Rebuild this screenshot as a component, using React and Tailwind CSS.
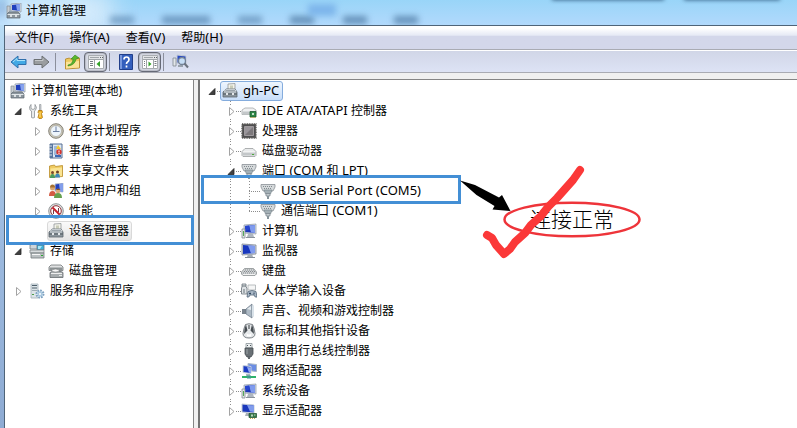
import { useState } from 'react';

const menus = ['文件(F)', '操作(A)', '查看(V)', '帮助(H)'];

const consoleTree = [
  { label: '计算机管理(本地)', icon: 'console', level: 0 },
  { label: '系统工具', icon: 'tools', level: 1, state: 'open' },
  { label: '任务计划程序', icon: 'clock', level: 2, state: 'closed' },
  { label: '事件查看器', icon: 'event', level: 2, state: 'closed' },
  { label: '共享文件夹', icon: 'shared', level: 2, state: 'closed' },
  { label: '本地用户和组', icon: 'users', level: 2, state: 'closed' },
  { label: '性能', icon: 'perf', level: 2, state: 'closed' },
  { label: '设备管理器', icon: 'device', level: 2 },
  { label: '存储', icon: 'storage', level: 1, state: 'open' },
  { label: '磁盘管理', icon: 'diskmgmt', level: 2 },
  { label: '服务和应用程序', icon: 'services', level: 1, state: 'closed' },
];

const deviceTree = [
  { label: 'IDE ATA/ATAPI 控制器', icon: 'ide', state: 'closed' },
  { label: '处理器', icon: 'cpu', state: 'closed' },
  { label: '磁盘驱动器', icon: 'drive', state: 'closed' },
  { label: '端口 (COM 和 LPT)', icon: 'port', state: 'open' },
  { label: 'USB Serial Port (COM5)', icon: 'port', child: true },
  { label: '通信端口 (COM1)', icon: 'port', child: true, last: true },
  { label: '计算机', icon: 'computer', state: 'closed' },
  { label: '监视器', icon: 'monitor', state: 'closed' },
  { label: '键盘', icon: 'keyboard', state: 'closed' },
  { label: '人体学输入设备', icon: 'hid', state: 'closed' },
  { label: '声音、视频和游戏控制器', icon: 'sound', state: 'closed' },
  { label: '鼠标和其他指针设备', icon: 'mouse', state: 'closed' },
  { label: '通用串行总线控制器', icon: 'usb', state: 'closed' },
  { label: '网络适配器', icon: 'network', state: 'closed' },
  { label: '系统设备', icon: 'computer', state: 'closed' },
  { label: '显示适配器', icon: 'display', state: 'closed', last: true },
];

const screen = (
  <>
    <path d="M3 2l12-1v10L3 10z" fill="#d5dbe3" stroke="#8b95a3" strokeWidth=".7" />
    <path d="M4 3l10-1v8L4 9z" fill="#1c36b8" />
    <path d="M8 2.6l6-.6v8L10 9.6z" fill="#7f9bee" />
    <path d="M4 3l4-.4 1 4L4 8z" fill="#2746d0" />
    <path d="M7 11h5l1 3H6z" fill="#aeb6bf" />
    <path d="M5 14h9v1H5z" fill="#8a929b" />
  </>
);

const toolbox = (
  <>
    <path d="M6 1l7-.5V7H6z" fill="#f2f2ea" stroke="#93989a" strokeWidth=".8" />
    <path d="M8 2.5h3v3H8z" fill="#c9ccb8" />
    <path d="M1 9l3-3h9l2 3v5H1z" fill="#8d979e" stroke="#5e686f" strokeWidth=".8" />
    <path d="M2 9h12M2 8.2l2-1.5h9l1 1.5" stroke="#d5dbdf" fill="none" />
    <path d="M1 11h14" stroke="#4f585e" />
    <path d="M4 10h2v2H4zM10 10h2v2h-2z" fill="#e4e8ea" />
  </>
);

const disk = (
  <>
    <path d="M1 8.500l3-3h8l3 3v4l-1 1H2l-1-1z" fill="#e9ebec" stroke="#9a9ea0" strokeWidth=".8" />
    <path d="M1.500 9h13v3.500h-13z" fill="#c3c7c9" />
    <path d="M2 9h12" stroke="#fafafa" />
    <path d="M11 11h2v1h-2z" fill="#4caa3a" />
  </>
);

const icons = {
  console: (
    <>
      <path d="M5 1l10-1v9L5 8z" fill="#e0e5ec" stroke="#8792a2" strokeWidth=".7" />
      <path d="M6 2l8-1v7L6 7z" fill="#2040bd" />
      <path d="M10 1.500l4-.5v7l-3-.5z" fill="#86a2ee" />
      <path d="M1 3h3v8H1z" fill="#c7cdd2" stroke="#858d94" strokeWidth=".7" />
      <path d="M1 11l2-2h9l2 2v4H1z" fill="#8d979e" stroke="#59636b" strokeWidth=".7" />
      <path d="M1.500 11.500h12" stroke="#e1e6e9" />
      <path d="M4 12h2v2H4zM9 12h2v2H9z" fill="#d9dee1" />
    </>
  ),
  tools: (
    <>
      <path d="M2 1.500v4l2 1 2-1v-4l1.500 3L6.500 7 5.500 8v6.500q-1.500 1-3 0V8L1 7 .5 4z" fill="#e9ebec" stroke="#8c9194" strokeWidth=".8" />
      <path d="M10.500 1.500h1.500V8h-1.500z" fill="#cbd0d3" stroke="#7c8184" strokeWidth=".5" />
      <path d="M9.500 7.500h3.500l.5 2-1 1 1 4-1 1H10l-1-1 1-4-1-1z" fill="#f0b323" stroke="#a56d0b" strokeWidth=".7" />
      <path d="M11 9v5" stroke="#ffe38a" />
    </>
  ),
  clock: (
    <>
      <circle cx="8" cy="8" r="7.300" fill="#d0cbbb" stroke="#77756b" strokeWidth=".9" />
      <circle cx="8" cy="8" r="5.500" fill="#eef5fb" stroke="#9d9c92" strokeWidth=".6" />
      <path d="M8 3.500v5h3.500M8 8.500H5" stroke="#5c7296" fill="none" strokeWidth=".9" />
    </>
  ),
  event: (
    <>
      <path d="M2 1h12v14H2z" fill="#dde8f4" stroke="#576e92" />
      <path d="M2 1h3v14H2z" fill="#58769f" />
      <path d="M1 3h3M1 6h3M1 9h3M1 12h3" stroke="#dce3ea" />
      <path d="M6 3h3v9H6z" fill="#9fb9d9" />
      <path d="M10 2l3 4H8z" fill="#f3c72a" />
      <circle cx="11" cy="9" r="2.700" fill="#d7342c" />
      <path d="M11 7.500v2M11 10v1" stroke="#fff" />
      <path d="M7 12h6v2H7z" fill="#3c68b4" />
    </>
  ),
  shared: (
    <>
      <path d="M1.500 3l5-1 1 1.500 7-1v11l-13 1z" fill="#efcb62" stroke="#b98d2a" strokeWidth=".8" />
      <path d="M2.500 5.500l11.500-1v8.500l-11.500 1z" fill="#fae493" />
      <circle cx="4.500" cy="9.500" r="1.500" fill="#7c4a2b" />
      <path d="M2 15q0-4 2.500-4T7 15z" fill="#4b9b60" />
      <circle cx="9.500" cy="9" r="1.500" fill="#6b4125" />
      <path d="M7 14.500q0-4 2.500-4t2.500 4z" fill="#3e89b9" />
    </>
  ),
  users: (
    <>
      <path d="M7 1l8-1v9L7 8z" fill="#203fbd" stroke="#bbc4cf" />
      <path d="M11 1l4-.5V9l-3-.5z" fill="#829eeb" />
      <circle cx="4.500" cy="5" r="2.500" fill="#d9a672" />
      <path d="M2 4.500q0-3 2.500-3T7 4.500z" fill="#a5702f" />
      <path d="M1 13q0-5 3.500-5T8 13z" fill="#d35b43" />
      <circle cx="10" cy="8" r="2.300" fill="#dbab78" />
      <path d="M8 7q2-3 4.500 0z" fill="#885324" />
      <path d="M6 15q0-5 4-5t4 5z" fill="#65a14e" />
    </>
  ),
  perf: (
    <>
      <circle cx="8" cy="8" r="7.300" fill="#e3e3e3" stroke="#84888a" strokeWidth=".9" />
      <circle cx="8" cy="8" r="5.300" fill="#fff" stroke="#8f3138" />
      <path d="M4.500 4.500l7 7" stroke="#c8212b" strokeWidth="2" />
      <path d="M5.500 11V7M10.500 9V5" stroke="#783a42" />
    </>
  ),
  device: toolbox,
  storage: (
    <>
      <path d="M1 2l3-1h5v5H1z" fill="#cfd5d9" stroke="#737c82" strokeWidth=".8" />
      <path d="M8 2h7v5H8z" fill="#3cb2da" stroke="#64727d" strokeWidth=".8" />
      <path d="M9 3h4l-2 3H9z" fill="#a9e5f6" />
      <path d="M1 7h14v3H1z" fill="#d8dcde" stroke="#808689" strokeWidth=".8" />
      <path d="M2 10h13v5H2z" fill="#bbc0c2" stroke="#757b7e" strokeWidth=".8" />
      <path d="M3 11.500h8" stroke="#f6f6f6" />
      <path d="M12 12h2v1h-2z" fill="#28a82e" />
    </>
  ),
  diskmgmt: (
    <>
      <path d="M1 4l2-2h10l2 2v3.500H1z" fill="#e0e1e2" stroke="#717678" strokeWidth=".8" />
      <path d="M1.500 4.500h13v3h-13z" fill="#8c9294" />
      <path d="M2 9.500l2-1h9l2 1v5H2z" fill="#a7acae" stroke="#656b6e" strokeWidth=".8" />
      <path d="M3 10.500h11" stroke="#eee" />
      <ellipse cx="7.500" cy="7.500" rx="3.500" ry="1.500" fill="#f7f7f7" stroke="#737779" strokeWidth=".6" />
      <path d="M11 12h3v1h-3z" fill="#e5e9e6" />
    </>
  ),
  services: (
    <>
      <path d="M2 1h7v14H2z" fill="#dce4e8" stroke="#a3b0b9" strokeWidth=".8" />
      <path d="M3 2.500h5M3 5h5" stroke="#4e606c" />
      <path d="M3 7.500h5" stroke="#9eacb5" />
      <path d="M3 11h2v1H3z" fill="#4a9d47" />
      <circle cx="11" cy="11" r="3.500" fill="#e1eef9" stroke="#7fa2c0" strokeWidth="2" strokeDasharray="1.700 1" />
      <circle cx="11" cy="11" r="2.500" fill="#a9c8df" />
      <circle cx="11" cy="11" r="1" fill="#fff" />
    </>
  ),
  ide: (
    <>
      <path d="M1 7l3-2h8l3 2v4.500H1z" fill="#f0f1f2" stroke="#a4a8aa" strokeWidth=".8" />
      <path d="M1.500 8.500h13v3h-13z" fill="#c3c7c9" />
      <path d="M9 8.500h6V14H9z" fill="#2e8847" stroke="#1d5830" strokeWidth=".8" />
      <path d="M11 10h2v2h-2z" fill="#c4dfca" />
      <path d="M10 15v-1M12 15v-1M14 15v-1" stroke="#c7a741" />
    </>
  ),
  cpu: (
    <>
      <path d="M1 1h14v14H1z" fill="#6c6b69" stroke="#4d4c4b" strokeDasharray="1 .7" strokeWidth="1.300" />
      <path d="M2 2h12v12H2z" fill="#4e4e50" />
      <path d="M3.500 3.500h9v9h-9z" fill="#99959a" stroke="#b2adaf" strokeWidth=".7" />
      <path d="M4 12l8-8v8z" fill="#7d797c" />
    </>
  ),
  drive: disk,
  port: (
    <>
      <path d="M1 1.500h14v2.500l-2 4H3L1 4z" fill="#d5d9db" stroke="#8a9195" strokeWidth=".8" />
      <path d="M3 3.500h10M4 5.500h8" stroke="#838b8f" strokeDasharray="1 1" />
      <path d="M4 7h8l-1.500 4h-5z" fill="#a4b0b6" stroke="#7d8990" strokeWidth=".7" />
      <path d="M6 10.500h4V13H6z" fill="#c4ccd0" stroke="#78838a" strokeWidth=".7" />
      <path d="M7 13h2v3H7z" fill="#87949b" />
    </>
  ),
  computer: (
    <>
      {screen}
      <path d="M1 6h3v9H1z" fill="#e1e5e8" stroke="#858e96" strokeWidth=".8" />
      <path d="M2 8h1v5H2z" fill="#54a956" />
    </>
  ),
  monitor: (
    <>
      <path d="M1 1l14 1v9L1 12z" fill="#cfd5dc" stroke="#7d8794" strokeWidth=".8" />
      <path d="M2 2l12 1v7L2 11z" fill="#1938be" />
      <path d="M7 2.500L14 3v7l-4 .3z" fill="#819cef" />
      <path d="M7 11h4l1 3H6z" fill="#a5adb5" />
      <path d="M4 14h10v1H4z" fill="#858e97" />
    </>
  ),
  keyboard: (
    <>
      <path d="M.5 9l3-3.500h9l3 3.500v2l-1.500 1.500H2L.5 11z" fill="#cfd2d4" stroke="#8b9092" strokeWidth=".8" />
      <path d="M4 7h9M3 8.500h11M2 10h12" stroke="#868c8f" strokeDasharray="1 1" />
      <path d="M2 11.500h12" stroke="#f3f3f3" />
    </>
  ),
  hid: (
    <>
      <path d="M1 4V1h4v3l1 1v6H.5V5z" fill="#dfe3e6" stroke="#677178" strokeWidth=".8" />
      <path d="M2 2v2M4 2v2M3 6v4" stroke="#68747b" />
      <path d="M7 2h7.500v5H7z" fill="#f5f6f6" stroke="#a8aeb1" strokeWidth=".8" />
      <path d="M6 14l1-5.500q4-2 8 0l1 5.500q-2 1-3-2H9q-1 3-3 2z" fill="#aab9c7" stroke="#536679" strokeWidth=".8" />
      <path d="M8 10.500h2M9 9.500v2M13 9.500v2" stroke="#324761" />
    </>
  ),
  sound: (
    <>
      <path d="M1 6h4v5H1z" fill="#79838d" />
      <path d="M5 6l6-5v14l-6-4z" fill="#aebac5" stroke="#677685" strokeWidth=".7" />
      <path d="M6 6l4-3v4z" fill="#e5ebef" />
      <path d="M11 3l2-1v12l-2-1z" fill="#d9e2e9" />
    </>
  ),
  mouse: (
    <>
      <path d="M4.500 1.500q3.500-1.500 7 0l1.500 4 1 5q0 4.500-6 4.500t-6-4.500l1-5z" fill="#e4e7e9" stroke="#6d7378" strokeWidth=".9" />
      <path d="M5 1.500l1.500 6L3 11l.5-5zM11 1.500L9.500 7.500 13 11l-.5-5z" fill="#474d52" />
      <path d="M8 2v4" stroke="#343a3e" />
      <path d="M5.500 10q2.500 3 5 0l-.5 3.500H6z" fill="#fff" />
    </>
  ),
  usb: (
    <>
      <path d="M5 .5h6V5H5z" fill="#edf0f1" stroke="#8c9499" strokeWidth=".8" />
      <path d="M6 2h1v1H6zM9 2h1v1H9z" fill="#465158" />
      <path d="M4 5h8v6l-2 3H6l-2-3z" fill="#697075" stroke="#454b50" strokeWidth=".8" />
      <path d="M6 6v5" stroke="#9ba3a8" />
      <path d="M7 14h2v2H7z" fill="#60676c" />
    </>
  ),
  network: (
    <>
      <path d="M7 .5l8.500 1v7l-8.500-1z" fill="#6b8de4" stroke="#aab7c4" />
      <path d="M2 2.500l8 1v7l-8-1z" fill="#1c3dc5" stroke="#ccd5dc" />
      <path d="M6 4l4 .5V10l-2-.5z" fill="#91aaf0" />
      <path d="M5 11h4v2H5z" fill="#aab6bf" />
      <path d="M1 14h14" stroke="#2fb36a" strokeWidth="2" />
      <path d="M6 12.500h4v3H6z" fill="#3f9c8a" />
    </>
  ),
  display: (
    <>
      <path d="M1 1l12 1v8L1 9z" fill="#1b38bb" stroke="#c6ced7" />
      <path d="M6 2l7 .5V9l-4-.5z" fill="#819cec" />
      <path d="M5 10h4l1 3H4z" fill="#a8b0b8" />
      <path d="M8 10.500h7.500v4H8z" fill="#347846" stroke="#184b28" strokeWidth=".7" />
      <path d="M10 11.500h2v2h-2zM13 11.500h1.500v1H13z" fill="#b8d1bd" />
      <path d="M9 15.500h6" stroke="#caa950" strokeDasharray="1 1" />
    </>
  ),
};

function Icon({ name }) {
  return (
    <svg viewBox="0 0 16 16" className="h-4 w-4 shrink-0" aria-hidden="true">
      {icons[name]}
    </svg>
  );
}

/* Latin runs are set one size larger than the Chinese around them */
function Label({ text }) {
  return (
    <span className="whitespace-pre">
      {text.split(/([ -~]+)/).map((part, i) =>
        i % 2 ? (
          <span key={i} className="text-[13px]">
            {part}
          </span>
        ) : (
          part
        ),
      )}
    </span>
  );
}

/* One 19px column of the tree: guide lines plus the expander */
function Slot({ state, line, dash, last }) {
  return (
    <svg viewBox="0 0 19 20" className="h-5 w-[19px] shrink-0" aria-hidden="true">
      {line && <path d={last ? 'M8.500 0v10' : 'M8.500 0v20'} stroke="#8c8c8c" strokeDasharray="1 2" />}
      {dash && <path d="M8 10.500h11" stroke="#8c8c8c" strokeDasharray="1 1" />}
      {state && <path d="M5 5h9v11H5z" fill="#fff" />}
      {state === 'closed' && <path d="M7.500 6.500v8l4.500-4z" fill="#fff" stroke="#a3a3a3" />}
      {state === 'open' && <path d="M12 7.500v6H6z" fill="#404040" stroke="#262626" strokeWidth=".8" />}
    </svg>
  );
}

const indent = ['pl-1', 'pl-1', 'pl-[23px]'];

function ConsoleTree() {
  const [selected, setSelected] = useState('设备管理器');

  return (
    <nav className="w-[189px] shrink-0 border-r border-[#858585] bg-white pt-px">
      {consoleTree.map((item) => (
        <div key={item.label} className={`flex h-5 items-center ${indent[item.level]}`}>
          {item.level > 0 && <Slot state={item.state} />}
          <button
            onClick={() => setSelected(item.label)}
            className={`flex h-5 items-center gap-[5px] rounded-[3px] border pr-0.5 whitespace-nowrap ${
              selected === item.label
                ? 'border-[#d9d9d9] bg-linear-to-b from-[#fafafa] to-[#e5e5e5]'
                : 'border-transparent'
            }`}
          >
            <Icon name={item.icon} />
            {item.label}
          </button>
        </div>
      ))}
    </nav>
  );
}

function DeviceTree() {
  return (
    <main className="min-w-0 flex-1 border-l-2 border-[#747474] bg-white pt-px pl-[3px]">
      <div className="flex h-5 items-center">
        <Slot state="open" dash />
        <button className="-ml-0.5 flex h-5 items-center gap-[5px] rounded-[3px] border border-[#84acdd] bg-linear-to-b from-[#eef5fe] to-[#c8def9] px-px pr-[3px]">
          <Icon name="device" />
          <Label text="gh-PC" />
        </button>
      </div>
      {deviceTree.map((item) => (
        <div key={item.label} className="flex h-5 items-center pl-[19px]">
          {item.child && <Slot line />}
          <Slot state={item.state} line dash last={item.last} />
          <button className="flex h-5 items-center gap-[5px]">
            <Icon name={item.icon} />
            <Label text={item.label} />
          </button>
        </div>
      ))}
    </main>
  );
}

function Separator() {
  return <span className="h-[18px] w-px bg-[#8b8f9c]" />;
}

function PaneIcon({ right }) {
  return (
    <svg viewBox="0 0 16 14" className="h-3.5 w-4">
      <path d="M.5.5h15v13H.5z" fill="#fff" stroke="#a9adb1" />
      <path d="M1 1h14v3H1z" fill="#e2e4e6" />
      <path d="M2 2.500h9M1 4.500h14" stroke="#a0a5a9" />
      <path d="M12 2.500h1M14 2.500h1" stroke="#5b6166" />
      {right ? (
        <>
          <path d="M4.500 5v8M11.500 5v8" stroke="#a0a5a9" />
          <path d="M6.500 6.500v5l3-2.500z" fill="#34a329" />
          <path d="M12.500 6.500h2M12.500 8.500h2M12.500 10.500h2M2 6.500h1M2 8.500h1M2 10.500h1" stroke="#777d82" />
        </>
      ) : (
        <>
          <path d="M6.500 5v8" stroke="#a0a5a9" />
          <path d="M12 6v6L8.500 9z" fill="#34a329" />
          <path d="M2 6.500h3M2 8.500h3M2 10.500h3" stroke="#777d82" />
        </>
      )}
    </svg>
  );
}

function Toolbar() {
  const toggle =
    'flex h-5 w-[23px] items-center justify-center rounded-[4px] border border-[#666a76] bg-[#d9dce6] shadow-[inset_0_0_2px_#666a76]';

  return (
    <div className="flex h-[22px] items-center border-t border-white bg-linear-to-b from-[#d1d6e7] to-[#dde3f5] pl-[5px]">
      <button aria-label="后退">
        <svg viewBox="0 0 17 14" className="h-3.5 w-[17px]">
          <path d="M1 7l7-6v3.500h8v5H8V13z" fill="#42a9e5" stroke="#2f6fac" />
          <path d="M3 7l4-3.500v2h8" fill="none" stroke="#a8e2fa" />
        </svg>
      </button>
      <button aria-label="前进" className="ml-1.5">
        <svg viewBox="0 0 17 14" className="h-3.5 w-[17px]">
          <path d="M16 7L9 1v3.500H1v5h8V13z" fill="#9a9da0" stroke="#6c7073" />
          <path d="M2 5.500h8v-2" fill="none" stroke="#c5c8ca" />
        </svg>
      </button>
      <span className="ml-[5px] flex">
        <Separator />
      </span>
      <button aria-label="上移" className="ml-[9px]">
        <svg viewBox="0 0 15 16" className="h-4 w-[15px]">
          <path d="M.5 5l4-1 1 1 9-1v10l-14 1z" fill="#edca61" stroke="#bc9137" />
          <path d="M1 8l13-1v6.500L1 14.500z" fill="#fae397" />
          <path d="M3 11q5-1 5-6H6l4-4 4 3-3 1q-1 6-8 7z" fill="#59b72d" stroke="#38831d" strokeWidth=".6" />
        </svg>
      </button>
      <button aria-label="显示控制台树" className={`ml-1 ${toggle}`}>
        <PaneIcon />
      </button>
      <span className="ml-0.5 flex">
        <Separator />
      </span>
      <button aria-label="帮助" className="ml-[9px]">
        <svg viewBox="0 0 14 16" className="h-4 w-3.5">
          <path d="M.5.5h13v15H.5z" fill="#345fbd" stroke="#213f8b" />
          <path d="M1 1h2v14H1z" fill="#7897dc" />
          <path d="M5 5.500q0-2.500 2.500-2.500T10 5.500Q10 7 8.500 8 7.500 8.500 7.500 10M7.500 11.500v2" fill="none" stroke="#fff" strokeWidth="1.700" />
        </svg>
      </button>
      <button aria-label="显示操作窗格" className={`ml-[5px] ${toggle}`}>
        <PaneIcon right />
      </button>
      <span className="ml-0.5 flex">
        <Separator />
      </span>
      <button aria-label="扫描检测硬件改动" className="ml-2">
        <svg viewBox="0 0 17 16" className="h-4 w-[17px]">
          <path d="M5 1l9 1v8L5 9z" fill="#294ac2" stroke="#c3cbd5" />
          <path d="M1 4h3v8H1z" fill="#e2e6e9" stroke="#818991" strokeWidth=".8" />
          <path d="M6 11h5v2H6z" fill="#99a3ad" />
          <circle cx="10" cy="7" r="3.500" fill="#c6def5" stroke="#728195" strokeWidth="1.300" />
          <path d="M12.500 9.500l3.500 4" stroke="#6b737e" strokeWidth="2" />
        </svg>
      </button>
    </div>
  );
}

function TitleBar() {
  return (
    <header className="relative flex h-[25px] shrink-0 items-center gap-1 overflow-hidden bg-linear-to-b from-[#99d5f8] to-[#b1d9fc] pb-1 pl-1.5">
      <span className="absolute -top-2 left-0 h-10 w-28 bg-[#d5ebfb] blur-md" />
      <span className="absolute top-0 left-0 h-4 w-1 bg-[#6387c0] blur-xs" />
      <span className="absolute top-4 left-[110px] h-2 w-6 bg-[#527fa9]/60 blur-[3px]" />
      <span className="absolute top-4 left-[162px] h-2 w-12 bg-[#527fa9]/70 blur-[3px]" />
      <span className="absolute top-4 left-[238px] h-2 w-6 bg-[#527fa9]/60 blur-[3px]" />
      <span className="absolute top-4 left-[290px] h-2 w-6 bg-[#527fa9]/80 blur-[3px]" />
      <span className="absolute top-1 left-[308px] h-3 w-7 bg-[#74aee7]/80 blur-[3px]" />
      <span className="absolute top-4 left-[343px] h-2 w-6 bg-[#527fa9]/80 blur-[3px]" />
      <span className="absolute top-4 left-[394px] h-2 w-6 bg-[#527fa9]/80 blur-[3px]" />
      <span className="absolute -top-2 left-[552px] h-2 w-28 bg-[#31597f] blur-[2px]" />
      <span className="absolute -top-2 left-[684px] h-2 w-24 bg-[#31597f] blur-[2px]" />
      <span className="relative flex items-center gap-1">
        <Icon name="console" />
        <h1>计算机管理</h1>
      </span>
    </header>
  );
}

function Annotations() {
  return (
    <div className="pointer-events-none absolute inset-0 overflow-hidden">
      <div className="absolute top-[215px] left-1.5 h-[30px] w-[188px] border-3 border-[#438fd5]" />
      <div className="absolute top-[175px] left-[201px] h-[29px] w-[260px] border-3 border-[#438fd5]" />
      <p className="absolute top-[206px] left-[530px] text-[21px] leading-[26px] font-light whitespace-nowrap">连接正常</p>
      <svg viewBox="0 0 220 110" className="absolute top-40 left-[440px] h-[110px] w-[220px]">
        <path d="M20 20.500l15 4.500 24 12.500 3-2.500 8.500 16-18-1.500 2-3.500-18-11z" fill="#000" />
        <ellipse cx="132" cy="59.500" rx="67.500" ry="16.800" fill="none" stroke="#ee343a" strokeWidth="2.500" />
        <path
          d="M47 75l5 3 4 7 8 9 6-5 5-7 10-9 6-8 10-9 7-9 9-9 8-9 8-9 7-10"
          fill="none"
          stroke="#fb3838"
          strokeWidth="8"
          strokeLinecap="round"
          strokeLinejoin="round"
        />
      </svg>
    </div>
  );
}

function App() {
  return (
    <div className="relative flex min-h-screen flex-col bg-[#94b1d7] font-['Noto_Sans','Noto_Sans_CJK_SC',sans-serif] text-xs text-black">
      <TitleBar />
      <div className="flex flex-1 flex-col bg-linear-to-b from-[#b9dcf5] via-[#9dbbe0] to-[#8eabd3] pl-1">
        <div className="flex flex-1 flex-col border-t border-l border-[#4f6478] bg-[#f0f0f0]">
          <div className="flex h-[23px] items-center gap-4 bg-linear-to-b from-white from-10% via-[#e6eaf5] via-40% to-[#d3d7ea] to-45% pl-2.5">
            {menus.map((label) => (
              <button key={label}>
                <Label text={label} />
              </button>
            ))}
          </div>
          <div className="border-y border-[#a9abb3]">
            <Toolbar />
          </div>
          <div className="mt-1.5 flex flex-1 gap-[4px] border-t border-[#858585]">
            <ConsoleTree />
            <DeviceTree />
          </div>
        </div>
      </div>
      <Annotations />
    </div>
  );
}

export default App;
